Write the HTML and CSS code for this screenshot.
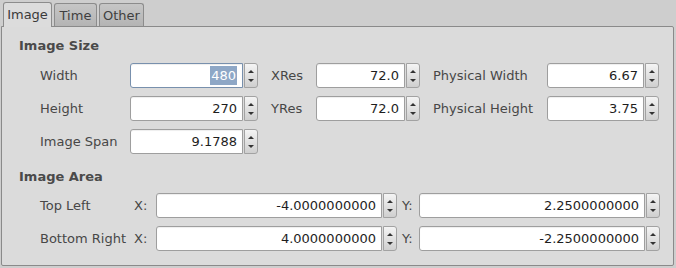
FILE: index.html
```html
<!DOCTYPE html>
<html>
<head>
<meta charset="utf-8">
<link rel="stylesheet" href="styles.css">
</head>
<body>
<div class="tabs">
  <div class="tab active">Image</div>
  <div class="tab">Time</div>
  <div class="tab">Other</div>
</div>
<div class="pane">
  <div class="header">Image Size</div>
  <div class="size-grid">
    <div class="lbl">Width</div>
    <div class="spin focus"><div class="field"><span class="sel">480</span></div><div class="btn"></div></div>
    <div class="lbl pad">XRes</div>
    <div class="spin"><div class="field">72.0</div><div class="btn"></div></div>
    <div class="lbl pad">Physical Width</div>
    <div class="spin"><div class="field">6.67</div><div class="btn"></div></div>

    <div class="lbl">Height</div>
    <div class="spin"><div class="field">270</div><div class="btn"></div></div>
    <div class="lbl pad">YRes</div>
    <div class="spin"><div class="field">72.0</div><div class="btn"></div></div>
    <div class="lbl pad">Physical Height</div>
    <div class="spin"><div class="field">3.75</div><div class="btn"></div></div>

    <div class="lbl">Image Span</div>
    <div class="spin"><div class="field">9.1788</div><div class="btn"></div></div>
  </div>
  <div class="header second">Image Area</div>
  <div class="area-grid">
    <div class="lbl">Top Left</div>
    <div class="lbl">X:</div>
    <div class="spin"><div class="field">-4.0000000000</div><div class="btn"></div></div>
    <div class="lbl ypad">Y:</div>
    <div class="spin"><div class="field">2.2500000000</div><div class="btn"></div></div>

    <div class="lbl">Bottom Right</div>
    <div class="lbl">X:</div>
    <div class="spin"><div class="field">4.0000000000</div><div class="btn"></div></div>
    <div class="lbl ypad">Y:</div>
    <div class="spin"><div class="field">-2.2500000000</div><div class="btn"></div></div>
  </div>
</div>
</body>
</html>
```
FILE: styles.css
```css
html, body {
  margin: 0;
  padding: 0;
}
body {
  width: 676px;
  height: 268px;
  background: #cecece;
  font-family: "DejaVu Sans", "Liberation Sans", sans-serif;
  font-size: 13px;
  color: #454545;
  overflow: hidden;
}
.tabs {
  display: flex;
  align-items: flex-end;
  gap: 2px;
  height: 26px;
  padding-left: 3px;
}
.tab {
  box-sizing: border-box;
  height: 23px;
  border: 1px solid #8c8c8c;
  border-bottom: none;
  border-radius: 3px 3px 0 0;
  background: linear-gradient(#c6c6c6, #b4b4b4);
  color: #3f3f3f;
  display: flex;
  align-items: center;
  justify-content: center;
  padding-top: 1px;
}
.tab:nth-child(2) { width: 43px; }
.tab:nth-child(3) { width: 45px; }
.tab.active {
  width: 49px;
  height: 25px;
  margin-bottom: -1px;
  background: #dcdcdc;
  position: relative;
  z-index: 1;
  color: #3a3a3a;
  padding-top: 0;
  padding-bottom: 2px;
}
.pane {
  box-sizing: border-box;
  margin-left: 1px;
  width: 673px;
  height: 240px;
  border: 1px solid #8a8a8a;
  border-radius: 0 2px 2px 2px;
  background: #dbdbdb;
  padding: 11px 0 0 17px;
}
.header {
  font-weight: bold;
  line-height: 16px;
  height: 16px;
  color: #4a4a4a;
}
.second {
  margin-top: 15px;
}
.size-grid {
  display: grid;
  grid-template-columns: 90px 128px 58px 104px 127px 112px;
  grid-auto-rows: 25px;
  row-gap: 8px;
  margin: 9px 0 0 21px;
}
.area-grid {
  display: grid;
  grid-template-columns: 94px 22px 241px 22px 241px;
  grid-auto-rows: 25px;
  row-gap: 8px;
  margin: 8px 0 0 21px;
}
.lbl {
  display: flex;
  align-items: center;
  white-space: nowrap;
  color: #474747;
}
.pad { padding-left: 13px; }
.ypad { padding-left: 5px; }
.spin {
  display: flex;
  gap: 1px;
  height: 25px;
}
.field {
  flex: 1;
  box-sizing: border-box;
  border: 1px solid #9e9e9e;
  border-radius: 3px 0 0 3px;
  background: #fff;
  box-shadow: inset 0 1px 1px rgba(0,0,0,0.07);
  display: flex;
  align-items: center;
  justify-content: flex-end;
  padding-right: 5px;
  color: #1e1e1e;
}
.focus .field {
  border-color: #7890ad;
}
.sel {
  background: #8ea7c6;
  color: #fff;
  line-height: 19px;
  padding: 0 1px;
}
.btn {
  box-sizing: border-box;
  width: 14px;
  border: 1px solid #a2a2a2;
  border-radius: 0 3px 3px 0;
  background: linear-gradient(#f4f4f4, #cfcfcf);
  display: flex;
  flex-direction: column;
  align-items: center;
  justify-content: center;
  gap: 6px;
}
.btn::before {
  content: "";
  border-left: 3px solid transparent;
  border-right: 3px solid transparent;
  border-bottom: 3px solid #333;
}
.btn::after {
  content: "";
  border-left: 3px solid transparent;
  border-right: 3px solid transparent;
  border-top: 3px solid #333;
}
```
